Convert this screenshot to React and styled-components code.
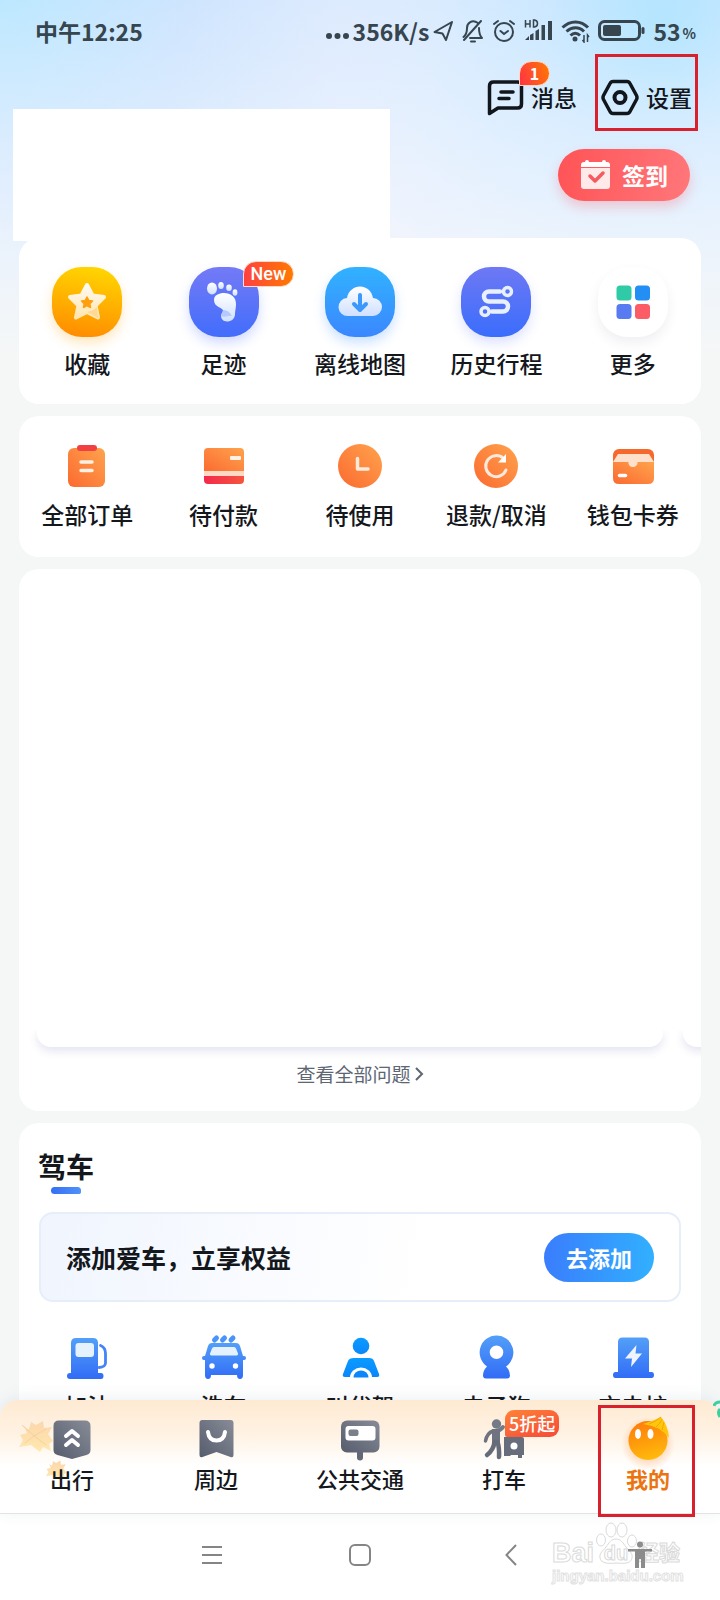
import React, { useState } from "react";
import styled, { createGlobalStyle, css } from "styled-components";

const GlobalStyle = createGlobalStyle`
  * {
    box-sizing: border-box;
  }
  body {
    margin: 0;
    color: #14171c;
    font-family: "Noto Sans CJK SC", sans-serif;
    font-weight: 500;
    background: #f5f7f7;
  }
  button {
    padding: 0;
    border: 0;
    background: none;
    color: inherit;
    font: inherit;
    cursor: pointer;
  }
  a {
    color: inherit;
    text-decoration: none;
  }
  svg {
    display: block;
    flex: none;
  }
`;

const Screen = styled.div`
  position: relative;
  display: flex;
  flex-direction: column;
  height: 100vh;
  overflow: hidden;
  background: linear-gradient(
      180deg,
      rgba(245, 247, 247, 0) 0,
      rgba(243, 247, 254, 0.55) 200px,
      #f5f7f7 356px
    ),
    radial-gradient(circle at 0 0, #bce8ff 0, #cfe5fe 190px, transparent 440px),
    radial-gradient(circle at 92% 30px, #b0e4ff 0, #cce8ff 120px, transparent 340px),
    #e8effe;
`;

const StatusBar = styled.div`
  display: flex;
  justify-content: space-between;
  align-items: center;
  height: 54px;
  flex: none;
  padding: 8px 24px 0 35px;
  color: #36454e;
  font-size: 23px;
  font-weight: 700;
  line-height: 28px;
`;

const StatusItems = styled.div`
  display: flex;
  align-items: center;
  gap: 8px;
`;

const Speed = styled.span`
  display: flex;
  align-items: center;
  gap: 3px;
  margin-right: -4px;
`;

const Battery = styled.span`
  display: flex;
  align-items: center;
  gap: 2px;
  small {
    padding-top: 4px;
    font-size: 14px;
  }
`;

const Content = styled.main`
  flex: 1;
  min-height: 0;
  overflow: hidden;
`;

const Header = styled.header`
  display: flex;
  justify-content: space-between;
  align-items: flex-start;
  height: 184px;
`;

const Profile = styled.div`
  width: calc(54% - 12px);
  height: 132px;
  margin: 55px 0 0 13px;
  background: #fff;
`;

const HeaderSide = styled.div`
  display: flex;
  flex-direction: column;
  align-items: flex-end;
  gap: 18px;
  padding-right: 22px;
`;

const HeaderActions = styled.div`
  display: flex;
  align-items: center;
  gap: 18px;
`;

const HeaderButton = styled.button`
  position: relative;
  display: flex;
  align-items: center;
  gap: 7px;
  height: 77px;
  padding-top: 9px;
  font-size: 23px;
  line-height: 28px;
  ${({ $marked }) =>
    $marked &&
    css`
      padding: 9px 3px 0;
      border: 3px solid #d9212d;
    `}
`;

const CountBadge = styled.span`
  position: absolute;
  top: 7px;
  left: 32px;
  width: 31px;
  height: 25px;
  border: 1px solid #ffd9c4;
  border-radius: 13px 13px 13px 0;
  background: linear-gradient(70deg, #ff3344, #ff7a00);
  color: #fff;
  font-size: 16px;
  font-weight: 700;
  line-height: 23px;
  text-align: center;
`;

const SignIn = styled.button`
  display: flex;
  justify-content: center;
  align-items: center;
  gap: 11px;
  width: 132px;
  height: 52px;
  margin-right: 8px;
  border-radius: 26px;
  background: linear-gradient(100deg, #ff5356, #ff777a);
  box-shadow: 0 6px 12px rgba(255, 90, 96, 0.28);
  color: #fff;
  font-size: 23px;
  font-weight: 700;
`;

const Cards = styled.div`
  display: flex;
  flex-direction: column;
  gap: 12px;
  margin: 0 19px;
`;

const Card = styled.section`
  flex: none;
  overflow: hidden;
  padding: ${({ $pad }) => $pad || "28px 0"};
  border-radius: 20px;
  background: #fff;
`;

const Row = styled.div`
  display: grid;
  grid-template-columns: repeat(5, 1fr);
`;

const Entry = styled.button`
  display: flex;
  flex-direction: column;
  align-items: center;
  gap: ${({ $gap }) => $gap || 12}px;
  font-size: 23px;
  line-height: 28px;
  white-space: nowrap;
`;

const Tile = styled.span`
  position: relative;
  width: 70px;
  height: 70px;
  border-radius: 30px;
  background: ${({ $bg }) => $bg};
  box-shadow: 0 6px 12px ${({ $glow }) => $glow};
`;

const NewBadge = styled.span`
  position: absolute;
  top: -6px;
  left: 54px;
  height: 26px;
  padding: 0 7px;
  border: 1px solid #ffd9c4;
  border-radius: 13px 13px 13px 0;
  background: linear-gradient(90deg, #ff4040, #ff7a00);
  color: #fff;
  font-family: Roboto, sans-serif;
  font-size: 18px;
  line-height: 24px;
`;

const Blank = styled.div`
  height: 461px;
`;

const Peek = styled.div`
  display: flex;
  gap: 20px;
  height: 32px;
  overflow: hidden;
  padding-left: 18px;
`;

const PeekCard = styled.div`
  flex: 0 0 ${({ $next }) => ($next ? "100px" : "calc(100% - 38px)")};
  height: 17px;
  border-radius: 0 0 14px 14px;
  background: #fff;
  box-shadow: 0 4px 8px rgba(90, 90, 170, 0.16);
  clip-path: inset(0 -8px -20px -8px);
`;

const AllQuestions = styled.a`
  display: flex;
  justify-content: center;
  align-items: center;
  gap: 4px;
  color: #5d6673;
  font-size: 19px;
  font-weight: 400;
  line-height: 24px;
`;

const Title = styled.h2`
  display: inline-block;
  margin: 0 0 18px 19px;
  font-size: 28px;
  font-weight: 700;
  line-height: 34px;
  &::after {
    content: "";
    display: block;
    width: 30px;
    height: 7px;
    margin: 4px auto 0;
    border-radius: 4px 4px 2px 4px;
    background: linear-gradient(90deg, #366ff5, #4f92f8);
  }
`;

const AddCar = styled.div`
  display: flex;
  justify-content: space-between;
  align-items: center;
  height: 90px;
  margin: 0 20px 32px;
  padding: 0 25px;
  border: 2px solid #e6eef9;
  border-radius: 14px;
  background: linear-gradient(100deg, #f0f5fe, #fff 60%);
  font-size: 25px;
  font-weight: 700;
`;

const AddButton = styled.button`
  width: 110px;
  height: 49px;
  border-radius: 25px;
  background: linear-gradient(90deg, #3a7dfd, #31b0ff);
  color: #fff;
  font-size: 22px;
  font-weight: 700;
`;

const TabBar = styled.nav`
  position: relative;
  z-index: 1;
  flex: none;
  display: grid;
  grid-template-columns: repeat(5, 1fr);
  height: 114px;
  border-bottom: 1px solid #e4e4e4;
  border-radius: 18px 18px 0 0;
  background: linear-gradient(180deg, #feead2 0, #fff2e3 34px, #fff 66px);
  box-shadow: 0 -2px 16px rgba(60, 90, 110, 0.09);
`;

const Tab = styled.button`
  position: relative;
  display: flex;
  flex-direction: column;
  align-items: center;
  gap: 3px;
  padding-top: 17px;
  color: ${({ $active }) => ($active ? "#ec7410" : "#14171c")};
  font-size: 22px;
  font-weight: ${({ $active }) => ($active ? 700 : 500)};
  line-height: 28px;
`;

const TabMark = styled.span`
  position: absolute;
  top: 5px;
  left: 50%;
  width: 97px;
  height: 112px;
  margin-left: -50px;
  border: 3px solid #d9212d;
`;

const SaleBadge = styled.span`
  position: absolute;
  top: 10px;
  left: 50%;
  margin-left: 1px;
  padding: 0 4px;
  border-radius: 9px 9px 9px 2px;
  background: linear-gradient(160deg, #ff8236, #f6483a);
  color: #fff;
  font-size: 18px;
  line-height: 27px;
`;

const Leaves = styled.svg`
  position: absolute;
  top: 20px;
  left: 16px;
`;

const Sprout = styled.svg`
  position: absolute;
  top: 0;
  right: 0;
`;

const SystemNav = styled.div`
  position: relative;
  flex: none;
  display: flex;
  justify-content: center;
  align-items: center;
  height: 86px;
  padding-bottom: 5px;
  background: #fff;
`;

const NavKeys = styled.div`
  display: grid;
  grid-template-columns: 1fr auto 1fr;
  align-items: center;
  width: 318px;
`;

const NavKey = styled.button`
  justify-self: ${({ $side }) => $side || "center"};
`;

const Watermark = styled.div`
  position: absolute;
  top: 8px;
  right: 38px;
  width: 130px;
`;

const Brand = styled.div`
  display: flex;
  align-items: center;
  margin-top: 16px;
  color: #fff;
  font-family: "Liberation Sans", "Noto Sans CJK SC", sans-serif;
  font-size: 27px;
  font-weight: 700;
  line-height: 30px;
  white-space: nowrap;
  -webkit-text-stroke: 1px #dadada;
`;

const BrandMid = styled.span`
  position: relative;
  width: 44px;
  text-align: center;
  font-size: 20px;
`;

const BrandEnd = styled.span`
  font-size: 21px;
`;

const BrandUrl = styled.div`
  color: #fff;
  font-family: "Liberation Sans", sans-serif;
  font-size: 15px;
  font-weight: 700;
  line-height: 16px;
  text-align: center;
  -webkit-text-stroke: 1px #e2e2e2;
`;

const Paw = styled.svg`
  position: absolute;
  top: 0;
  left: 43px;
`;

const Figure = styled.svg`
  position: absolute;
  top: 27px;
  right: 68px;
`;

const Gradients = () => (
  <svg width="0" height="0" style={{ position: "absolute" }} aria-hidden="true">
    <defs>
      <linearGradient id="orange" x1="1" y1="0" x2="0" y2="1">
        <stop offset="0" stopColor="#ffa34d" />
        <stop offset="1" stopColor="#fb6a30" />
      </linearGradient>
      <linearGradient id="red" x1="0" y1="0" x2="1" y2="0">
        <stop offset="0" stopColor="#f4284c" />
        <stop offset="1" stopColor="#f5553f" />
      </linearGradient>
      <linearGradient id="blue" x1="0" y1="0" x2="0" y2="1">
        <stop offset="0" stopColor="#539ff8" />
        <stop offset="1" stopColor="#316cf6" />
      </linearGradient>
      <linearGradient id="azure" x1="0" y1="0" x2="0" y2="1">
        <stop offset="0" stopColor="#0a9bff" />
        <stop offset="1" stopColor="#0b86fb" />
      </linearGradient>
      <linearGradient id="slate" x1="1" y1="0" x2="0" y2="1">
        <stop offset="0" stopColor="#888c98" />
        <stop offset="1" stopColor="#555c6c" />
      </linearGradient>
      <linearGradient id="cream" x1="0" y1="0" x2="0" y2="1">
        <stop offset="0" stopColor="#fffaf0" />
        <stop offset="1" stopColor="#ffe6b0" />
      </linearGradient>
      <linearGradient id="ice" x1="0" y1="0" x2="0" y2="1">
        <stop offset="0" stopColor="#ffffff" />
        <stop offset="1" stopColor="#cfe0ff" />
      </linearGradient>
      <linearGradient id="ball" x1="0.3" y1="0" x2="0.6" y2="1">
        <stop offset="0" stopColor="#ff7c0a" />
        <stop offset="1" stopColor="#ffbb0c" />
      </linearGradient>
      <linearGradient id="leaf" x1="0" y1="0" x2="0" y2="1">
        <stop offset="0" stopColor="#fcd6ae" />
        <stop offset="1" stopColor="#ffe9ad" />
      </linearGradient>
      <radialGradient id="ballGlow">
        <stop offset="0.5" stopColor="#ff9a4a" stopOpacity="0.4" />
        <stop offset="1" stopColor="#ff9a4a" stopOpacity="0" />
      </radialGradient>
    </defs>
  </svg>
);

const StatusIcons = () => (
  <>
    <svg width="21" height="24" viewBox="0 0 21 24" fill="none" stroke="currentColor" strokeWidth="2" strokeLinejoin="round">
      <path d="M19 3 1.500 13l8 1.500L13 21z" />
    </svg>
    <svg width="22" height="24" viewBox="0 0 22 24" fill="none" stroke="currentColor" strokeWidth="2" strokeLinecap="round" strokeLinejoin="round">
      <path d="M16 4C10 0 5 4 5 9c0 5-1 7-3.500 9M8 19h12c-2-2-3-5-3-10M19 2 2 21M9 22.500h4" />
    </svg>
    <svg width="24" height="24" viewBox="0 0 24 24" fill="none" stroke="currentColor" strokeWidth="2" strokeLinecap="round">
      <circle cx="12" cy="13" r="9" />
      <path d="m8.500 12 3.500 3 4-3M2 5l4-3M22 5l-4-3" />
    </svg>
    <svg width="29" height="24" viewBox="0 0 29 24" fill="currentColor">
      <path d="M1.500 1v7.500M6 1v7.500M1.500 5H6M9.500 1v7h1q3-.5 3-3.500t-3-3.500z" fill="none" stroke="currentColor" strokeWidth="1.500" />
      <path d="m1 21 4-4v4zM6 16l3.500-2v7H6zM11.500 12l3.500-2v11h-3.500zM17.500 6H21v15h-3.500zM24 2h4v19h-4z" />
    </svg>
    <svg width="29" height="24" viewBox="0 0 29 24" fill="none" stroke="currentColor" strokeWidth="3">
      <path d="M1.500 8.500C9 1 20 1 27 8.500M5.500 12.500c5.500-5 12.500-5 17.500 0M9.500 16.500c3-3 6.500-3 9.500 0" />
      <circle cx="14" cy="20" r="2.500" fill="currentColor" stroke="none" />
      <path d="M23 16v7l-1.500-2M26.500 23v-7l1.500 2" strokeWidth="1.500" />
    </svg>
    <svg width="47" height="24" viewBox="0 0 47 24" fill="none" stroke="currentColor">
      <rect x="1.500" y="2.500" width="40" height="18" rx="5" strokeWidth="3" />
      <rect x="5" y="6" width="18" height="11" rx="2" fill="currentColor" stroke="none" />
      <path d="M45 9.500v4" strokeWidth="3" strokeLinecap="round" />
    </svg>
  </>
);

const MessageIcon = () => (
  <svg width="37" height="37" viewBox="0 0 37 37" fill="none" stroke="#11151c" strokeWidth="3.500" strokeLinecap="round" strokeLinejoin="round">
    <path d="M2.500 34.500V7q0-4 4-4h24q4 0 4 4v18q0 4-4 4H11zM14 13h12M12 19.500h10" />
  </svg>
);

const SettingsIcon = () => (
  <svg width="38" height="37" viewBox="0 0 38 37" fill="none" stroke="#11151c" strokeWidth="3.500" strokeLinejoin="round">
    <path d="M12 2.500h14q2 0 3 2l6.500 12q1 2 0 4l-6.500 12q-1 2-3 2H12q-2 0-3-2L2.500 20.500q-1-2 0-4L9 4.500q1-2 3-2z" />
    <circle cx="19" cy="18.500" r="5.500" strokeWidth="4" />
  </svg>
);

const CalendarIcon = () => (
  <svg width="31" height="32" viewBox="0 0 31 32">
    <path d="M1 6q0-3 3-3h1q0-2 2-2t2 2h13q0-2 2-2t2 2h1q3 0 3 3v2H1z" fill="#fff" />
    <path d="M1 9h29v18q0 3-3 3H4q-3 0-3-3z" fill="#ffe9e9" />
    <path d="m10 17 5 5 8-8" fill="none" stroke="#f55a5f" strokeWidth="3.500" strokeLinecap="round" strokeLinejoin="round" />
  </svg>
);

const Big = ({ children }) => (
  <svg width="70" height="70" viewBox="0 0 70 70" fill="none">
    {children}
  </svg>
);

const Mid = ({ children }) => (
  <svg width="44" height="44" viewBox="0 0 44 44" fill="none">
    {children}
  </svg>
);

const Car = ({ children }) => (
  <svg width="48" height="48" viewBox="0 0 48 48" fill="url(#blue)">
    {children}
  </svg>
);

const tools = [
  {
    label: "收藏",
    bg: "linear-gradient(190deg, #ffd600 5%, #ff8c00 95%)",
    glow: "rgba(255, 170, 30, .28)",
    icon: (
      <Big>
        <path d="m35 18 5.500 10.500L52 30l-8.500 8.500L46 50.500 35 45l-11 5.500 2.500-12L18 30l11.500-1.500z" fill="url(#cream)" stroke="url(#cream)" strokeWidth="4" strokeLinejoin="round" />
        <path d="m46 51-11-6c5-1 8-3 10-5z" fill="#ffd993" />
        <path d="m35 30 1.800 3.500 3.700.5-2.700 2.700.7 3.800-3.500-1.800-3.500 1.800.7-3.800-2.700-2.700 3.700-.5z" fill="#ff9f0c" stroke="#ff9f0c" strokeWidth="1.500" strokeLinejoin="round" />
      </Big>
    ),
  },
  {
    label: "足迹",
    badge: "New",
    bg: "linear-gradient(180deg, #747af6, #426dfb)",
    glow: "rgba(80, 110, 255, .25)",
    icon: (
      <Big>
        <g fill="url(#ice)">
          <ellipse cx="23" cy="21.500" rx="5" ry="6" />
          <ellipse cx="32" cy="18.500" rx="2.800" ry="3.500" />
          <ellipse cx="40" cy="20.700" rx="2.800" ry="3.300" />
          <ellipse cx="46" cy="25.500" rx="2.400" ry="3.200" />
          <path d="M25 33c0-5 5-7 10-7 7 0 12 4 12 11 0 4-1 7-1 10 0 5-4 7.500-8 7.500s-6-3-6-6c0-2 2-3 2-5 0-3-9-3-9-10.500z" />
        </g>
        <path d="M34 43q6 0 9 6c-3-1-7 2-11 0 0-2 2-3 2-6z" fill="#b5c8ff" />
      </Big>
    ),
  },
  {
    label: "离线地图",
    bg: "linear-gradient(180deg, #31b2ff, #3b87fe)",
    glow: "rgba(50, 140, 255, .25)",
    icon: (
      <Big>
        <path d="M23 49a9 9 0 0 1-1-18c1-7 7-11.500 13-11.500 7 0 12 5 13 11.500a9 9 0 0 1 0 18z" fill="url(#ice)" />
        <path d="M35 28v14M29 37l6 6 6-6" stroke="#3c98fb" strokeWidth="4" strokeLinecap="round" strokeLinejoin="round" />
      </Big>
    ),
  },
  {
    label: "历史行程",
    bg: "linear-gradient(180deg, #6e78f4, #3a6dfc)",
    glow: "rgba(90, 110, 255, .2)",
    icon: (
      <Big>
        <g stroke="#e8f0ff" strokeWidth="4.500" strokeLinecap="round">
          <path d="M39 24.500H28a5 5 0 0 0 0 10h14a5 5 0 0 1 0 10H31" />
          <circle cx="46.500" cy="24.500" r="4" strokeWidth="3.500" />
          <circle cx="24" cy="44.500" r="4" strokeWidth="3.500" />
        </g>
      </Big>
    ),
  },
  {
    label: "更多",
    bg: "#fff",
    glow: "rgba(60, 70, 100, .08)",
    icon: (
      <Big>
        <rect x="18.500" y="18.500" width="15" height="15" rx="3.500" fill="#2ecba6" />
        <rect x="37" y="18.500" width="15" height="15" rx="3.500" fill="#238ff5" />
        <rect x="18.500" y="37" width="15" height="15" rx="3.500" fill="#587bf2" />
        <rect x="37" y="37" width="15" height="15" rx="3.500" fill="#fc5c66" />
      </Big>
    ),
  },
];

const orders = [
  {
    label: "全部订单",
    icon: (
      <Mid>
        <rect x="3" y="4" width="37" height="39" rx="6" fill="url(#orange)" />
        <rect x="12" y="1" width="20" height="6" rx="3" fill="#f23f42" />
        <path d="M16 18h11M16 26.500h11" stroke="#fff0e4" strokeWidth="3.500" strokeLinecap="round" />
      </Mid>
    ),
  },
  {
    label: "待付款",
    icon: (
      <Mid>
        <path d="M2 8q0-4 4-4h32q4 0 4 4v20H2z" fill="url(#orange)" />
        <path d="M2 31h40v5q0 4-4 4H6q-4 0-4-4z" fill="url(#red)" />
        <path d="M2 27h40v5H2z" fill="#ffd9c3" />
        <rect x="28" y="12" width="11" height="4" rx="1" fill="#fff3e8" />
      </Mid>
    ),
  },
  {
    label: "待使用",
    icon: (
      <Mid>
        <circle cx="22" cy="22" r="22" fill="url(#orange)" />
        <path d="M19.500 14.500V25H30" stroke="#ffe9da" strokeWidth="3.500" strokeLinecap="round" strokeLinejoin="round" />
      </Mid>
    ),
  },
  {
    label: "退款/取消",
    icon: (
      <Mid>
        <circle cx="22" cy="22" r="22" fill="url(#orange)" />
        <path d="M32 26a10.500 10.500 0 1 1-2.500-11.500" stroke="#ffe9da" strokeWidth="3" strokeLinecap="round" />
        <path d="M32 10v8.500h-8z" fill="#fff" />
      </Mid>
    ),
  },
  {
    label: "钱包卡券",
    icon: (
      <Mid>
        <rect x="2" y="5" width="41" height="20" rx="6" fill="#f56a2c" />
        <path d="M2 18h41v16q0 6-6 6H8q-6 0-6-6z" fill="url(#orange)" />
        <path d="M7 10h31l5 8H2z" fill="#ffe0cb" />
        <path d="M17.500 17.500h9a4.500 4.500 0 0 1-9 2z" fill="#ffe0cb" />
        <path d="M8.500 31.500h6" stroke="#fff" strokeWidth="3.500" strokeLinecap="round" />
      </Mid>
    ),
  },
];

const services = [
  {
    label: "加油",
    icon: (
      <Car>
        <path d="M8 39V9q0-5 5-5h17q5 0 5 5v30h3q2.500 0 2.500 3t-2.500 3H7q-3 0-3-3t3-3z" />
        <rect x="12.500" y="9" width="18.500" height="14" rx="3" fill="#e6f1fe" />
        <path d="M37.500 11.500q5 2 5 8V29q0 4-6.500 4.500" fill="none" stroke="#4484f7" strokeWidth="2.800" strokeLinecap="round" />
      </Car>
    ),
  },
  {
    label: "洗车",
    icon: (
      <Car>
        <path d="m14.500 6 2-2M22.500 6l2-2M31 6l2-2" stroke="#4a93f8" strokeWidth="5" strokeLinecap="round" />
        <path d="M12 9h24q3 0 4 3l3 10h1q2 0 2 2t-3 2v15q0 4-3 4t-3-4H11q0 4-3 4t-3-4V26q-3 0-3-2t2-2h1l3-10q1-3 4-3z" />
        <path d="M14 13h20q1.500 0 2 1.500l2 5q.5 2-1.500 2h-25q-2 0-1.500-2l2-5q.5-1.500 2-1.500z" fill="#e6f1fe" />
        <circle cx="12" cy="32" r="2.700" fill="#fff" />
        <circle cx="35.500" cy="32" r="2.700" fill="#fff" />
      </Car>
    ),
  },
  {
    label: "叫代驾",
    icon: (
      <Car>
        <circle cx="25" cy="12" r="8.300" fill="url(#azure)" />
        <path d="M18 24h15q4 0 5 3l5 13q1 3-2 3H9q-3 0-2-3l5-13q1-3 6-3z" fill="url(#azure)" />
        <path d="M14 43.500a11 10 0 0 1 22 0z" fill="#fff" />
        <path d="M17.500 43.500a7.500 7 0 0 1 15 0z" fill="#0b86fb" />
      </Car>
    ),
  },
  {
    label: "电子狗",
    icon: (
      <Car>
        <path fillRule="evenodd" d="M24.500 1.500a17 17 0 0 1 9.500 31q4 4 4 9 0 3-3 3H14q-3 0-3-3 0-5 4-9a17 17 0 0 1 9.500-31zm0 10a6.800 6.800 0 1 0 0 13.600 6.800 6.800 0 0 0 0-13.600z" />
      </Car>
    ),
  },
  {
    label: "充电桩",
    icon: (
      <Car>
        <path d="M9 38V8q0-4.500 4.500-4.500h22Q40 3.500 40 8v30h2.500q2.500 0 2.500 3t-2.500 3h-36Q4 44 4 41t2.500-3z" />
        <path d="M27.500 11 16 24.500h7L22 33l11-13.500h-6.500z" fill="#eef5ff" />
      </Car>
    ),
  },
];

const tabs = [
  {
    label: "出行",
    icon: (
      <Mid>
        <path d="M3.500 9q0-5.500 5.500-5.500h26q5.500 0 5.500 5.500v24q0 4-4 5L22 42 7.500 38q-4-1-4-5z" fill="url(#slate)" />
        <path d="m16 19 6-5 6 5M16 28l6-5 6 5" stroke="#fff" strokeWidth="4" strokeLinecap="round" strokeLinejoin="round" />
      </Mid>
    ),
  },
  {
    label: "周边",
    icon: (
      <Mid>
        <path d="M5.500 6q0-3 3-3h28q3 0 3 3v32q0 3-3 2l-14-5-14 5q-3 1-3-2z" fill="url(#slate)" />
        <path d="M14 15q1 8.500 8.500 8.500T31 15" stroke="#fff" strokeWidth="4" strokeLinecap="round" />
      </Mid>
    ),
  },
  {
    label: "公共交通",
    icon: (
      <Mid>
        <path d="M22 32v8.500" stroke="#626876" strokeWidth="6" strokeLinecap="round" />
        <rect x="3" y="3.500" width="38.500" height="32" rx="6" fill="url(#slate)" />
        <rect x="7.500" y="9" width="30" height="14.500" rx="3" fill="#fff" />
        <rect x="10.500" y="12.500" width="10" height="6.500" rx="2" fill="#7a7f8c" />
      </Mid>
    ),
  },
  {
    label: "打车",
    badge: "5折起",
    icon: (
      <Mid>
        <circle cx="14.500" cy="7" r="4.700" fill="#747a87" />
        <path d="M14 14q4 0 7-4" stroke="#747a87" strokeWidth="4" strokeLinecap="round" />
        <path d="M11 14q-6 2-7.500 10" stroke="#6d7380" strokeWidth="3.500" strokeLinecap="round" />
        <path d="M10 12h8v14h-8z" fill="#6d7380" />
        <path d="M12.500 25q-1 8-7.500 13M15.500 25q2 6 1.500 15" stroke="#656b79" strokeWidth="4.500" strokeLinecap="round" strokeLinejoin="round" />
        <path d="M22 20h18q2 0 2 2v16h-2v3h-4v-3h-7l-1 1h-6z" fill="#676d7b" />
        <circle cx="32" cy="29" r="3.500" fill="#fff" />
      </Mid>
    ),
  },
  {
    label: "我的",
    active: true,
    icon: (
      <svg width="44" height="44" viewBox="0 0 44 44" fill="none" overflow="visible">
        <circle cx="22" cy="27" r="27" fill="url(#ballGlow)" />
        <circle cx="22" cy="23.500" r="19.500" fill="url(#ball)" />
        <path d="M17 7q10-3 18-7 7 8 8 21-9-12-26-14z" fill="#ffc60c" />
        <path d="M35 0q-6 5-12 7M36 2q-2 5-6 8M38 5l-2 8" stroke="#f5a506" />
        <ellipse cx="12" cy="17" rx="3" ry="5" fill="#fff" />
        <ellipse cx="24.500" cy="17" rx="3" ry="5" fill="#fff" />
      </svg>
    ),
  },
];

const leafPath =
  "M5 6q4 4 5 3l2-7 5 3 7-4 1 7 8-1-4 7 5 7-4 3 2 7-8-4-3 5-9-7-12 2 4-7-3-5 7-2z";

const App = () => {
  const [activeTab, setActiveTab] = useState("我的");

  return (
    <Screen>
      <GlobalStyle />
      <Gradients />
      <StatusBar>
        <span>中午12:25</span>
        <StatusItems>
          <Speed>
            <svg width="25" height="24" viewBox="0 0 25 24" fill="currentColor">
              <circle cx="4" cy="17" r="3" />
              <circle cx="12.500" cy="17" r="3" />
              <circle cx="21" cy="17" r="3" />
            </svg>
            356K/s
          </Speed>
          <StatusIcons />
          <Battery>
            53<small>%</small>
          </Battery>
        </StatusItems>
      </StatusBar>

      <Content>
        <Header>
          <Profile />
          <HeaderSide>
            <HeaderActions>
              <HeaderButton>
                <MessageIcon />
                消息
                <CountBadge>1</CountBadge>
              </HeaderButton>
              <HeaderButton $marked>
                <SettingsIcon />
                设置
              </HeaderButton>
            </HeaderActions>
            <SignIn>
              <CalendarIcon />
              签到
            </SignIn>
          </HeaderSide>
        </Header>

        <Cards>
          <Card $pad="29px 0 27px">
            <Row>
              {tools.map((item) => (
                <Entry key={item.label}>
                  <Tile $bg={item.bg} $glow={item.glow}>
                    {item.icon}
                    {item.badge && <NewBadge>{item.badge}</NewBadge>}
                  </Tile>
                  {item.label}
                </Entry>
              ))}
            </Row>
          </Card>

          <Card $pad="28px 0 29px">
            <Row>
              {orders.map((item) => (
                <Entry key={item.label}>
                  {item.icon}
                  {item.label}
                </Entry>
              ))}
            </Row>
          </Card>

          <Card $pad="0 0 25px">
            <Blank />
            <Peek>
              <PeekCard />
              <PeekCard $next />
            </Peek>
            <AllQuestions href="#questions">
              查看全部问题
              <svg width="9" height="16" viewBox="0 0 9 16" fill="none" stroke="currentColor" strokeWidth="2">
                <path d="m1 2 6 6-6 6" />
              </svg>
            </AllQuestions>
          </Card>

          <Card $pad="26px 0">
            <Title>驾车</Title>
            <AddCar>
              添加爱车，立享权益
              <AddButton>去添加</AddButton>
            </AddCar>
            <Row>
              {services.map((item) => (
                <Entry key={item.label} $gap={9}>
                  {item.icon}
                  {item.label}
                </Entry>
              ))}
            </Row>
          </Card>
        </Cards>
      </Content>

      <TabBar>
        <Leaves width="60" height="64" viewBox="0 0 60 64">
          <path d={leafPath} fill="url(#leaf)" transform="translate(3 0)" />
          <path d="M6 5q8 8 24 20M18 16l12-7M18 16l-9 7" stroke="#f9cf9c" fill="none" />
          <path d={leafPath} fill="url(#leaf)" transform="translate(30 40) scale(.6)" />
        </Leaves>
        <Sprout width="7" height="20" viewBox="0 0 7 20" fill="none" stroke="#3fcf9f" strokeWidth="3">
          <path d="M1 6q1-4 6-4M7 9q-3 3 0 8" />
        </Sprout>
        {tabs.map((tab) => (
          <Tab
            key={tab.label}
            $active={tab.label === activeTab}
            onClick={() => setActiveTab(tab.label)}
          >
            {tab.icon}
            {tab.label}
            {tab.badge && <SaleBadge>{tab.badge}</SaleBadge>}
            {tab.active && <TabMark />}
          </Tab>
        ))}
      </TabBar>

      <SystemNav>
        <NavKeys>
          <NavKey $side="start" aria-label="菜单">
            <svg width="22" height="22" viewBox="0 0 22 22" stroke="#858585" strokeWidth="2">
              <path d="M1 3h20M1 11h20M1 19h20" />
            </svg>
          </NavKey>
          <NavKey aria-label="主页">
            <svg width="22" height="22" viewBox="0 0 22 22" fill="none" stroke="#858585" strokeWidth="2">
              <rect x="1" y="1" width="20" height="20" rx="5" />
            </svg>
          </NavKey>
          <NavKey $side="end" aria-label="返回">
            <svg width="14" height="22" viewBox="0 0 14 22" fill="none" stroke="#858585" strokeWidth="2">
              <path d="M11 1 1.500 11l9.500 10" />
            </svg>
          </NavKey>
        </NavKeys>
        <Watermark>
          <Paw width="42" height="46" viewBox="0 0 42 46" fill="#fff" stroke="#dadada">
            <ellipse cx="16" cy="8" rx="5" ry="7" />
            <ellipse cx="27" cy="8" rx="5" ry="7" />
            <ellipse cx="6" cy="18" rx="4.500" ry="6" />
            <ellipse cx="37" cy="19" rx="4.500" ry="6" />
            <path d="M21 17c5 0 7 4 10 8s7 6 6 11-6 6-16 5c-9 1-15 0-16-5s3-7 6-11 5-8 10-8z" />
          </Paw>
          <Brand>
            Bai<BrandMid>du</BrandMid>
            <BrandEnd>经验</BrandEnd>
          </Brand>
          <BrandUrl>jingyan.baidu.com</BrandUrl>
        </Watermark>
        <Figure width="24" height="28" viewBox="0 0 24 28" fill="#8c8c8c">
          <circle cx="12" cy="3.500" r="3" />
          <path d="M0 8h24v2.500h-7V27h-4v-9h-2v9H7V10.500H0z" />
        </Figure>
      </SystemNav>
    </Screen>
  );
};

export default App;
